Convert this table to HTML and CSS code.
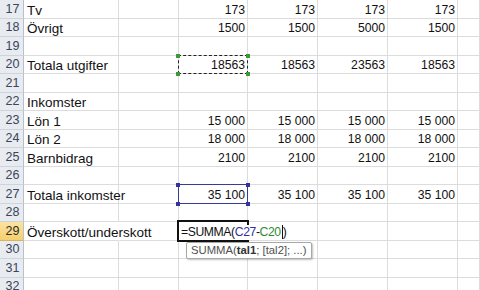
FILE: index.html
```html
<!DOCTYPE html>
<html lang="sv">
<head>
<meta charset="utf-8">
<title>Budget</title>
<link rel="stylesheet" href="styles.css">
</head>
<body>
<div class="sheet">
  <div class="row"><div class="hd">17</div><div class="c">Tv</div><div class="c"></div><div class="c num">173</div><div class="c num">173</div><div class="c num">173</div><div class="c num">173</div><div class="c"></div></div>
  <div class="row"><div class="hd">18</div><div class="c">Övrigt</div><div class="c"></div><div class="c num">1500</div><div class="c num">1500</div><div class="c num">5000</div><div class="c num">1500</div><div class="c"></div></div>
  <div class="row"><div class="hd">19</div><div class="c"></div><div class="c"></div><div class="c"></div><div class="c"></div><div class="c"></div><div class="c"></div><div class="c"></div></div>
  <div class="row"><div class="hd">20</div><div class="c">Totala utgifter</div><div class="c"></div><div class="c num ref-green"><span class="h tl"></span><span class="h tr"></span><span class="h bl"></span><span class="h br"></span>18563</div><div class="c num">18563</div><div class="c num">23563</div><div class="c num">18563</div><div class="c"></div></div>
  <div class="row"><div class="hd">21</div><div class="c"></div><div class="c"></div><div class="c"></div><div class="c"></div><div class="c"></div><div class="c"></div><div class="c"></div></div>
  <div class="row"><div class="hd">22</div><div class="c">Inkomster</div><div class="c"></div><div class="c"></div><div class="c"></div><div class="c"></div><div class="c"></div><div class="c"></div></div>
  <div class="row"><div class="hd">23</div><div class="c">Lön 1</div><div class="c"></div><div class="c num">15 000</div><div class="c num">15 000</div><div class="c num">15 000</div><div class="c num">15 000</div><div class="c"></div></div>
  <div class="row"><div class="hd">24</div><div class="c">Lön 2</div><div class="c"></div><div class="c num">18 000</div><div class="c num">18 000</div><div class="c num">18 000</div><div class="c num">18 000</div><div class="c"></div></div>
  <div class="row"><div class="hd">25</div><div class="c">Barnbidrag</div><div class="c"></div><div class="c num">2100</div><div class="c num">2100</div><div class="c num">2100</div><div class="c num">2100</div><div class="c"></div></div>
  <div class="row"><div class="hd">26</div><div class="c"></div><div class="c"></div><div class="c"></div><div class="c"></div><div class="c"></div><div class="c"></div><div class="c"></div></div>
  <div class="row"><div class="hd">27</div><div class="c">Totala inkomster</div><div class="c"></div><div class="c num ref-blue"><span class="h tl"></span><span class="h tr"></span><span class="h bl"></span><span class="h br"></span>35 100</div><div class="c num">35 100</div><div class="c num">35 100</div><div class="c num">35 100</div><div class="c"></div></div>
  <div class="row"><div class="hd">28</div><div class="c"></div><div class="c"></div><div class="c"></div><div class="c"></div><div class="c"></div><div class="c"></div><div class="c"></div></div>
  <div class="row"><div class="hd active">29</div><div class="c spill">Överskott/underskott</div><div class="c"></div><div class="c editing"><span class="formula">=SUMMA(<span class="r-blue">C27</span>-<span class="r-green">C20</span><span class="caret"></span>)</span><div class="tip">SUMMA(<b>tal1</b>; [tal2]; ...)</div></div><div class="c"></div><div class="c"></div><div class="c"></div><div class="c"></div></div>
  <div class="row"><div class="hd">30</div><div class="c"></div><div class="c"></div><div class="c"></div><div class="c"></div><div class="c"></div><div class="c"></div><div class="c"></div></div>
  <div class="row"><div class="hd">31</div><div class="c"></div><div class="c"></div><div class="c"></div><div class="c"></div><div class="c"></div><div class="c"></div><div class="c"></div></div>
  <div class="row"><div class="hd">32</div><div class="c"></div><div class="c"></div><div class="c"></div><div class="c"></div><div class="c"></div><div class="c"></div><div class="c"></div></div>
</div>
</body>
</html>
```

FILE: styles.css
```css
* { box-sizing: border-box; }
html, body { margin: 0; padding: 0; background: #fff; overflow: hidden; }
body { width: 480px; height: 290px; font-family: "Liberation Sans", Arial, sans-serif; color: #111; }

.sheet { display: flex; flex-direction: column; }

.row {
  display: grid;
  grid-template-columns: 24px 95px 60px 69px 70px 70px 70px 1fr;
  height: 18.5px;
}

.hd {
  background: #e8ebf0;
  border-right: 1px solid #b9c0ca;
  border-bottom: 1px solid #cfd4db;
  color: #38455a;
  font-size: 12.5px;
  text-align: center;
  display: flex;
  align-items: flex-end;
  justify-content: center;
  line-height: 15px;
  padding-bottom: 1px;
  padding-left: 2px;
}
.hd.active {
  background: linear-gradient(#fbe3a0, #f5cf6e);
  border-bottom-color: #d9b45a;
  color: #2c2c2c;
}

.c {
  position: relative;
  border-right: 1px solid #dcdcdc;
  border-bottom: 1px solid #dcdcdc;
  font-size: 13.5px;
  line-height: 15px;
  display: flex;
  align-items: flex-end;
  padding: 0 2px 0 3px;
  white-space: nowrap;
}
.c.num { justify-content: flex-end; font-size: 12.2px; padding-right: 2px; }

.c.spill { overflow: visible; border-right-color: transparent; z-index: 2; }

/* reference range finders */
.ref-green::after,
.ref-blue::after {
  content: "";
  position: absolute;
  top: -1px; left: -1px; right: -1px; bottom: -1px;
  pointer-events: none;
}
.ref-green::after { border: 1px dashed #222; }
.ref-blue::after { border: 1px solid #3a3a98; }
.h {
  position: absolute;
  width: 4px; height: 4px;
  z-index: 3;
}
.ref-green .h { background: #3a9a3a; }
.ref-blue .h { background: #33339a; }
.h.tl { top: -2px; left: -3px; }
.h.tr { top: -2px; right: -3px; }
.h.bl { bottom: -3px; left: -3px; }
.h.br { bottom: -3px; right: -3px; }

/* active editing cell */
.c.editing { overflow: visible; z-index: 4; padding-left: 2px; }
.c.editing::before {
  content: "";
  position: absolute;
  top: -2px; left: -2px; right: -2px; bottom: -2px;
  border: 2px solid #111;
  pointer-events: none;
}
.formula {
  font-size: 12.2px;
  letter-spacing: -0.4px;
  position: relative;
  z-index: 1;
  color: #111;
  background: #fff;
  padding-right: 1px;
}
.r-blue { color: #2f2fa8; }
.r-green { color: #2f8a2f; }
.caret {
  display: inline-block;
  width: 1px;
  height: 14px;
  background: #111;
  vertical-align: -3px;
  margin: 0 0 0 1px;
}

.tip {
  position: absolute;
  top: calc(100% + 2px);
  left: 7px;
  background: #fff;
  border: 1px solid #a8a8a8;
  border-radius: 2px;
  box-shadow: 1px 1px 2px rgba(0,0,0,0.25);
  padding: 0 4px 0 4px;
  font-size: 11.3px;
  line-height: 15px;
  color: #505050;
  white-space: nowrap;
  z-index: 5;
}
.tip b { color: #333; }
```
